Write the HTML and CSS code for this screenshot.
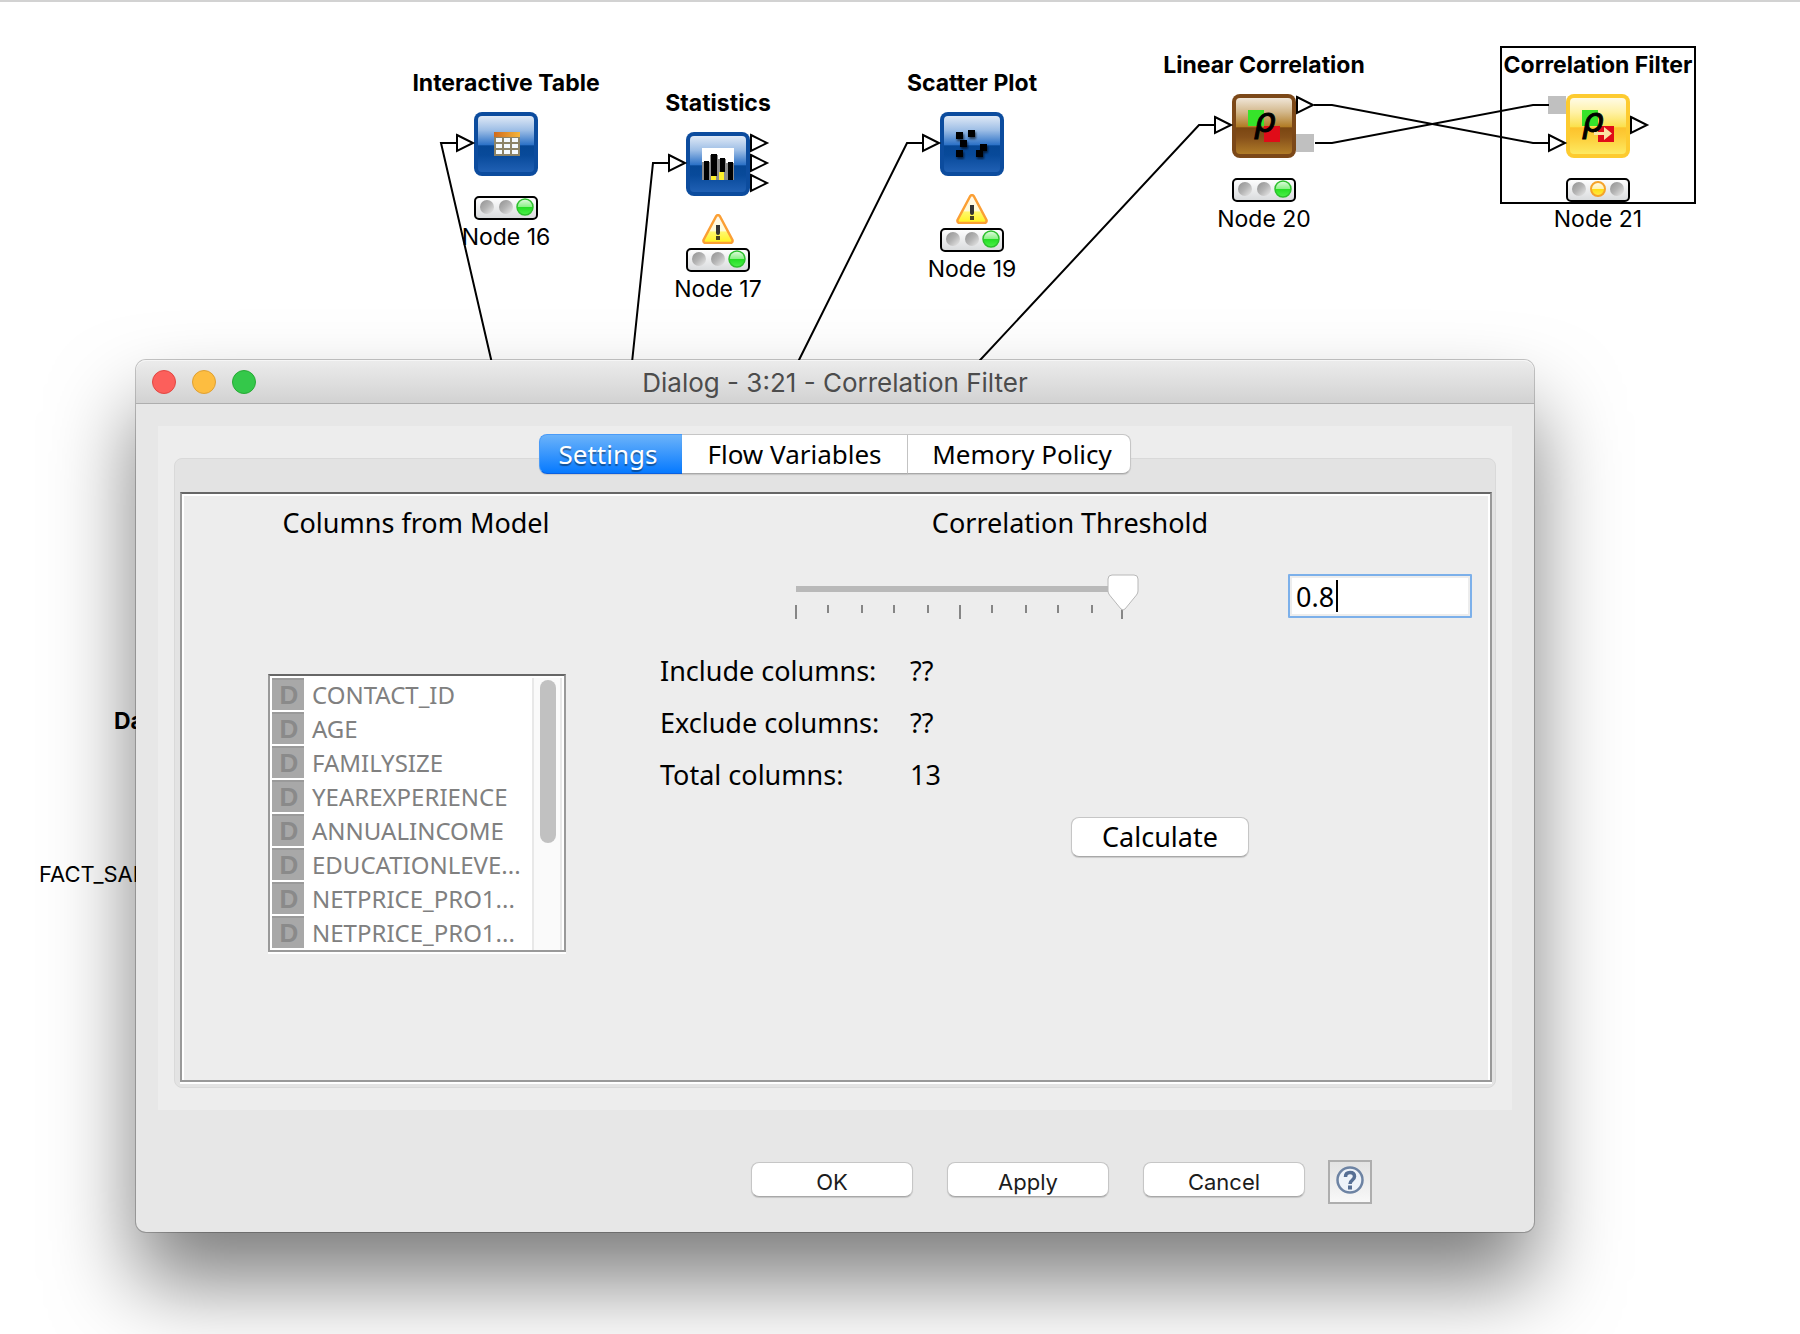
FILE: index.html
```html
<!DOCTYPE html>
<html lang="en">
<head>
<meta charset="utf-8">
<title>Dialog - 3:21 - Correlation Filter</title>
<link rel="stylesheet" href="styles.css">
</head>
<body>
<main class="workspace">

  <svg width="0" height="0" class="defs" aria-hidden="true">
    <defs>
      <linearGradient id="blue" x1="0" y1="0" x2="0" y2="1">
        <stop offset="0" stop-color="#dfe9f6"/><stop offset=".25" stop-color="#9fbfe6"/><stop offset=".52" stop-color="#2a70c6"/>
        <stop offset=".53" stop-color="#064795"/><stop offset=".7" stop-color="#084a9a"/><stop offset="1" stop-color="#2060b4"/>
      </linearGradient>
      <linearGradient id="brown" x1="0" y1="0" x2="0" y2="1">
        <stop offset="0" stop-color="#f0e6d8"/><stop offset=".25" stop-color="#d3b88c"/><stop offset=".52" stop-color="#b07a22"/>
        <stop offset=".53" stop-color="#7a4612"/><stop offset=".7" stop-color="#86501a"/><stop offset="1" stop-color="#b07c28"/>
      </linearGradient>
      <linearGradient id="yellow" x1="0" y1="0" x2="0" y2="1">
        <stop offset="0" stop-color="#fffbe6"/><stop offset=".25" stop-color="#fff2a8"/><stop offset=".52" stop-color="#fbe04a"/>
        <stop offset=".53" stop-color="#fcc22c"/><stop offset=".7" stop-color="#fdce3a"/><stop offset="1" stop-color="#fdea62"/>
      </linearGradient>
      <linearGradient id="lamp-off" x1="0" y1="0" x2="1" y2="1">
        <stop offset="0" stop-color="#909090"/><stop offset=".5" stop-color="#b4b4b4"/><stop offset="1" stop-color="#ececec"/>
      </linearGradient>
      <linearGradient id="lamp-green" x1="0" y1="0" x2="0" y2="1">
        <stop offset="0" stop-color="#e4fbe2"/><stop offset=".48" stop-color="#8cf088"/><stop offset=".5" stop-color="#22dd22"/><stop offset="1" stop-color="#4cf04a"/>
      </linearGradient>
      <linearGradient id="lamp-amber" x1="0" y1="0" x2="0" y2="1">
        <stop offset="0" stop-color="#fffbe8"/><stop offset=".5" stop-color="#fff2b0"/><stop offset=".52" stop-color="#ffdc14"/><stop offset="1" stop-color="#ffee4a"/>
      </linearGradient>
      <linearGradient id="case" x1="0" y1="0" x2="0" y2="1">
        <stop offset="0" stop-color="#fff"/><stop offset="1" stop-color="#d8dadc"/>
      </linearGradient>
      <linearGradient id="warn" x1="0" y1="0" x2="0" y2="1">
        <stop offset="0" stop-color="#fff8ec"/><stop offset=".55" stop-color="#fffbd8"/><stop offset=".62" stop-color="#fff86a"/><stop offset="1" stop-color="#fff21c"/>
      </linearGradient>
      <linearGradient id="table-head" x1="0" y1="0" x2="1" y2="0">
        <stop offset="0" stop-color="#d06a1c"/><stop offset="1" stop-color="#f4b63c"/>
      </linearGradient>
      <filter id="soft"><feDropShadow dx="1" dy="2" stdDeviation="1" flood-opacity=".6"/></filter>
      <symbol id="lights" viewBox="0 0 64 24">
        <rect x="1" y="1" width="62" height="22" rx="4" fill="url(#case)" stroke="#000" stroke-width="2"/>
        <circle cx="13" cy="11" r="7" fill="url(#lamp-off)"/>
        <circle cx="32" cy="11" r="7" fill="url(#lamp-off)"/>
        <circle cx="51" cy="11" r="8" fill="url(#lamp-green)" stroke="#2cc02c" stroke-width="1.500"/>
      </symbol>
      <symbol id="lights-amber" viewBox="0 0 64 24">
        <rect x="1" y="1" width="62" height="22" rx="4" fill="url(#case)" stroke="#000" stroke-width="2"/>
        <circle cx="13" cy="11" r="7" fill="url(#lamp-off)"/>
        <circle cx="51" cy="11" r="7" fill="url(#lamp-off)"/>
        <circle cx="32" cy="11" r="7" fill="url(#lamp-amber)" stroke="#f5a32a" stroke-width="2"/>
      </symbol>
      <symbol id="warning" viewBox="0 0 32 30">
        <path d="M14 2.500Q16 -.5 18 2.500L30.500 26Q31 29 28 29H4Q1 29 1.500 26Z" fill="url(#warn)" stroke="#fb9f34" stroke-width="2.500" stroke-linejoin="round"/>
        <path d="M14 11h4v8q0 2-2 2t-2-2Z" fill="#333"/><rect x="14" y="22" width="4" height="4" fill="#4a4420"/>
      </symbol>
    </defs>
  </svg>

  <section class="node node-table">
    <h2 class="node-title">Interactive Table</h2>
    <svg class="node-icon" viewBox="0 0 64 64">
      <rect width="64" height="64" rx="8" fill="#0c4c9e"/><rect x="4" y="4" width="56" height="56" rx="4" fill="url(#blue)"/>
      <rect x="20" y="20" width="26" height="24" fill="#8c8468"/><rect x="20" y="20" width="26" height="5" fill="url(#table-head)"/>
      <path d="M22 26h6v4h-6zM30 26h6v4h-6zM38 26h6v4h-6zM22 32h6v4h-6zM30 32h6v4h-6zM38 32h6v4h-6zM22 38h6v4h-6zM30 38h6v4h-6zM38 38h6v4h-6z" fill="#f4faff"/>
    </svg>
    <svg class="node-lights"><use href="#lights"/></svg>
    <p class="node-label">Node 16</p>
  </section>

  <section class="node node-statistics">
    <h2 class="node-title">Statistics</h2>
    <svg class="node-icon" viewBox="0 0 64 64">
      <rect width="64" height="64" rx="8" fill="#0c4c9e"/><rect x="4" y="4" width="56" height="56" rx="4" fill="url(#blue)"/>
      <rect x="16" y="16" width="32" height="32" fill="#fff"/>
      <path d="M16 30h8v18h-8zM24 23h8v25h-8zM32 27h8v21h-8zM40 31h8v17h-8z" fill="#8c8c8c"/>
      <path d="M18 29h5v19h-5zM25 22h6v22h-6zM34 26h5v14h-5zM42 30h5v18h-5z" fill="#000"/>
      <path d="M25 44h5v4h-5zM33 40h5v8h-5z" fill="#fff02a"/>
    </svg>
    <svg class="node-warning" role="img" aria-label="Warning"><use href="#warning"/></svg>
    <svg class="node-lights"><use href="#lights"/></svg>
    <p class="node-label">Node 17</p>
  </section>

  <section class="node node-scatter">
    <h2 class="node-title">Scatter Plot</h2>
    <svg class="node-icon" viewBox="0 0 64 64">
      <rect width="64" height="64" rx="8" fill="#0c4c9e"/><rect x="4" y="4" width="56" height="56" rx="4" fill="url(#blue)"/>
      <path filter="url(#soft)" d="M16 20h7v7h-7zM28 18h7v7h-7zM20 28h7v7h-7zM16 38h7v7h-7zM40 32h7v7h-7zM36 38h7v7h-7z" fill="#000"/>
    </svg>
    <svg class="node-warning" role="img" aria-label="Warning"><use href="#warning"/></svg>
    <svg class="node-lights"><use href="#lights"/></svg>
    <p class="node-label">Node 19</p>
  </section>

  <section class="node node-correlation">
    <h2 class="node-title">Linear Correlation</h2>
    <svg class="node-icon" viewBox="0 0 64 64">
      <rect width="64" height="64" rx="8" fill="#7c4818"/><rect x="4" y="4" width="56" height="56" rx="4" fill="url(#brown)"/>
      <rect x="16" y="16" width="16" height="16" fill="#36e42a"/><rect x="32" y="32" width="16" height="16" fill="#e00c18"/>
      <text class="rho" x="22" y="38">ρ</text>
    </svg>
    <svg class="node-lights"><use href="#lights"/></svg>
    <p class="node-label">Node 20</p>
  </section>

  <section class="node node-filter is-selected">
    <h2 class="node-title">Correlation Filter</h2>
    <svg class="node-icon" viewBox="0 0 64 64">
      <rect width="64" height="64" rx="8" fill="#fdcb30"/><rect x="4" y="4" width="56" height="56" rx="4" fill="url(#yellow)"/>
      <rect x="16" y="16" width="16" height="16" fill="#36e42a"/><rect x="32" y="32" width="16" height="16" fill="#e00c18"/>
      <text class="rho" x="16" y="38">ρ</text>
      <path d="M28 38h10v-5l8 6.500l-8 6.500v-5h-10z" fill="#fbe3a4"/>
    </svg>
    <svg class="node-lights"><use href="#lights-amber"/></svg>
    <p class="node-label">Node 21</p>
  </section>

  <h2 class="node-title behind-title">Da</h2>
  <p class="node-label behind-label">FACT_SAL</p>

  <svg class="connections" viewBox="0 0 1800 400" width="1800" height="400" aria-hidden="true">
    <g fill="#c0c0c0"><rect x="1296" y="134" width="18" height="18"/><rect x="1548" y="96" width="18" height="18"/></g>
    <g fill="none" stroke="#000" stroke-width="2">
      <path d="M457 143H441L494 372"/>
      <path d="M669 163H653L631 372"/>
      <path d="M923 143H907L793 372"/>
      <path d="M1215 125H1199L969 372"/>
      <path d="M1314 105H1332L1533 143H1549"/>
      <path d="M1315 143H1332L1533 105H1549"/>
    </g>
    <g fill="#fff" stroke="#000" stroke-width="2">
      <path d="M457 135l16 8l-16 8z"/><path d="M669 155l16 8l-16 8z"/><path d="M923 135l16 8l-16 8z"/>
      <path d="M1215 117l16 8l-16 8z"/><path d="M1549 135l16 8l-16 8z"/>
      <path d="M751 135l16 8l-16 8z"/><path d="M751 155l16 8l-16 8z"/><path d="M751 175l16 8l-16 8z"/>
      <path d="M1297 97l16 8l-16 8z"/><path d="M1631 117l16 8l-16 8z"/>
    </g>
  </svg>

  <form class="dialog" role="dialog" aria-labelledby="dialog-title">
    <header class="titlebar">
      <div class="window-buttons">
        <button type="button" class="window-button close" aria-label="Close"></button>
        <button type="button" class="window-button minimize" aria-label="Minimize"></button>
        <button type="button" class="window-button maximize" aria-label="Zoom"></button>
      </div>
      <h1 class="dialog-title" id="dialog-title">Dialog - 3:21 - Correlation Filter</h1>
    </header>

    <div class="dialog-body">
      <div class="panel">
        <div class="tabs" role="tablist">
          <button type="button" role="tab" aria-selected="true" class="tab is-active">Settings</button>
          <button type="button" role="tab" aria-selected="false" class="tab">Flow Variables</button>
          <button type="button" role="tab" aria-selected="false" class="tab">Memory Policy</button>
        </div>
        <div class="group">
          <div class="settings" role="tabpanel">
            <section class="model">
              <h2 class="heading">Columns from Model</h2>
              <div class="list-box">
                <ul class="list">
                  <li class="list-item"><span class="type-icon">D</span>CONTACT_ID</li>
                  <li class="list-item"><span class="type-icon">D</span>AGE</li>
                  <li class="list-item"><span class="type-icon">D</span>FAMILYSIZE</li>
                  <li class="list-item"><span class="type-icon">D</span>YEAREXPERIENCE</li>
                  <li class="list-item"><span class="type-icon">D</span>ANNUALINCOME</li>
                  <li class="list-item"><span class="type-icon">D</span>EDUCATIONLEVE...</li>
                  <li class="list-item"><span class="type-icon">D</span>NETPRICE_PRO1...</li>
                  <li class="list-item"><span class="type-icon">D</span>NETPRICE_PRO1...</li>
                </ul>
                <div class="scrollbar"><div class="scrollbar-thumb"></div></div>
              </div>
            </section>

            <section class="threshold">
              <h2 class="heading" id="threshold-heading">Correlation Threshold</h2>
              <div class="threshold-row">
                <div class="slider">
                  <input class="slider-input" type="range" min="0" max="1" step="0.1" value="1" aria-labelledby="threshold-heading">
                  <svg class="slider-ticks" viewBox="0 0 360 14" aria-hidden="true">
                    <path d="M16 0v14M48 0v8M82 0v8M114 0v8M148 0v8M180 0v14M212 0v8M246 0v8M278 0v8M312 0v8M342 0v14" stroke="#868686" stroke-width="2"/>
                  </svg>
                </div>
                <div class="field">
                  <input class="field-input" type="text" value="0.8" aria-labelledby="threshold-heading">
                  <span class="field-caret"></span>
                </div>
              </div>
              <dl class="summary">
                <dt>Include columns:</dt><dd>??</dd>
                <dt>Exclude columns:</dt><dd>??</dd>
                <dt>Total columns:</dt><dd>13</dd>
              </dl>
              <button type="button" class="button calculate">Calculate</button>
            </section>
          </div>
        </div>
      </div>
    </div>

    <footer class="dialog-footer">
      <div class="actions">
        <button type="submit" class="button action">OK</button>
        <button type="button" class="button action">Apply</button>
        <button type="button" class="button action">Cancel</button>
      </div>
      <button type="button" class="help" aria-label="Help">
        <svg width="28" height="28" viewBox="0 0 28 28">
          <circle cx="14" cy="14" r="12.500" fill="#eef3f9" stroke="#6d83a3" stroke-width="2.500"/>
          <path d="M9.500 11q0-4.500 4.500-4.500t4.500 4q0 2-2.200 3.600t-2.300 3.900" fill="none" stroke="#566f94" stroke-width="3.500"/>
          <rect x="12" y="19.500" width="4" height="4" fill="#566f94"/>
        </svg>
      </button>
    </footer>
  </form>
</main>
</body>
</html>
```
FILE: styles.css
```css
*,
*::before { box-sizing: border-box; }

body,
h1, h2, p, ul, dl, dd {
  margin: 0;
  padding: 0;
}

body {
  background: #fff;
  color: #000;
  font-family: Inter, "Liberation Sans", sans-serif;
  font-size: 23px;
  line-height: 28px;
}

button,
input {
  margin: 0;
  font: inherit;
  color: inherit;
}

.workspace {
  position: relative;
  min-height: 100vh;
  overflow: hidden;
  border-top: 2px solid #d2d2d2;
}

.defs { position: absolute; }

/* Workflow canvas */

.node {
  position: absolute;
  display: flex;
  flex-direction: column;
  align-items: center;
  width: 196px;
}

.node-table { left: 408px; top: 66px; }
.node-statistics { left: 620px; top: 86px; }
.node-scatter { left: 874px; top: 66px; }
.node-correlation { left: 1166px; top: 48px; }
.node-filter { left: 1500px; top: 48px; }

.node-title {
  font-size: 23px;
  font-weight: 700;
  line-height: 30px;
  white-space: nowrap;
}

.node-icon {
  width: 64px;
  height: 64px;
  margin: 14px 0 20px;
}

.node-warning {
  width: 32px;
  height: 30px;
  margin: -2px 0 4px;
}

.node-lights {
  width: 64px;
  height: 24px;
}

.node-label {
  margin-top: 2px;
  line-height: 30px;
  white-space: nowrap;
}

.rho {
  font: italic 34px "DejaVu Sans", sans-serif;
  stroke: #000;
  stroke-width: 1px;
}

.is-selected::before {
  content: "";
  position: absolute;
  top: -4px;
  left: 0;
  width: 100%;
  height: 158px;
  border: 2px solid #000;
}

.behind-title {
  position: absolute;
  left: 114px;
  top: 704px;
}

.behind-label {
  position: absolute;
  left: 39px;
  top: 855px;
  font-size: 22px;
}

.connections {
  position: absolute;
  left: 0;
  top: -2px;
}

/* Dialog window */

.dialog {
  position: absolute;
  left: 136px;
  right: 266px;
  top: 358px;
  border-radius: 10px;
  background: #e7e7e7;
  box-shadow: 0 0 0 1px rgba(0, 0, 0, .22), 0 50px 84px rgba(0, 0, 0, .51);
  font-family: "Noto Sans", "Open Sans", sans-serif;
}

.titlebar {
  display: grid;
  grid-template-columns: 1fr auto 1fr;
  align-items: center;
  height: 44px;
  padding: 0 16px;
  border-bottom: 1px solid #aeaeae;
  border-radius: 10px 10px 0 0;
  background: linear-gradient(#ececec, #d2d2d2);
  box-shadow: inset 0 1px #f6f6f6;
}

.window-buttons {
  display: flex;
  gap: 16px;
}

.window-button {
  width: 24px;
  height: 24px;
  padding: 0;
  border: 1px solid;
  border-radius: 50%;
}

.close { background: #fc5f5b; border-color: #e24742; }
.minimize { background: #fdbd40; border-color: #dfa033; }
.maximize { background: #34c84a; border-color: #27aa35; }

.dialog-title {
  padding-top: 2px;
  color: #4c4c4c;
  font-family: Inter, "Liberation Sans", sans-serif;
  font-size: 26px;
  font-weight: 400;
  line-height: 32px;
  white-space: nowrap;
}

.dialog-body { padding: 22px 22px 0; }

.panel {
  padding: 8px 16px 22px;
  background: #ededed;
}

.tabs {
  position: relative;
  display: flex;
  justify-content: center;
}

.tab {
  width: 226px;
  height: 40px;
  padding: 0;
  border: 1px solid #c6c6c6;
  border-bottom-color: #a8a8a8;
  border-left-width: 0;
  background: #fff;
  box-shadow: 0 1px 1px rgba(0, 0, 0, .12);
  font-size: 26px;
  line-height: 38px;
  white-space: nowrap;
}

.tab:last-child {
  width: 223px;
  padding-left: 6px;
  border-radius: 0 8px 8px 0;
}

.tab.is-active {
  width: 143px;
  padding-right: 6px;
  border: 1px solid #4a9bf7;
  border-right: 0;
  border-bottom-color: #0a60e0;
  border-radius: 8px 0 0 8px;
  background: linear-gradient(#6bb3fa, #067aff);
  color: #fff;
  text-shadow: 0 2px 1px rgba(0, 0, 0, .4);
}

.group {
  margin-top: -16px;
  padding: 33px 3px 5px 5px;
  border: 1px solid #d9d9d9;
  border-radius: 8px;
  background: #e3e3e3;
}

.settings {
  display: grid;
  grid-template-columns: 468px 1fr;
  min-height: 590px;
  border: 2px solid #999;
  border-top-color: #666;
  background: #ededed;
  box-shadow: 0 2px #fff, inset 2px 2px #fff, inset -2px 0 #fff;
}

.heading {
  font-size: 27px;
  font-weight: 400;
  line-height: 38px;
  text-align: center;
}

.model,
.threshold {
  display: flex;
  flex-direction: column;
  padding-top: 10px;
}

/* Column list */

.list-box {
  display: flex;
  align-self: center;
  width: 298px;
  margin: 132px 0 0 2px;
  padding: 2px 2px 0;
  border: 2px solid #999;
  border-top-color: #666;
  background: #fff;
  box-shadow: 0 2px #fff;
}

.list {
  flex: 1;
  min-width: 0;
  list-style: none;
}

.list-item {
  display: flex;
  gap: 8px;
  height: 34px;
  color: #808080;
  font-size: 24px;
  line-height: 34px;
  white-space: nowrap;
}

.type-icon {
  flex: none;
  width: 32px;
  height: 32px;
  padding-left: 2px;
  border-top: 2px solid #9a9a9a;
  background: #a8a8a8;
  color: #8a8a8a;
  font-family: "Liberation Sans", sans-serif;
  font-size: 26px;
  font-weight: 700;
  line-height: 30px;
  text-align: center;
}

.scrollbar {
  width: 30px;
  padding: 2px 6px;
  border: 2px solid #e8e8e8;
  border-width: 0 2px;
  background: #fafafa;
}

.scrollbar-thumb {
  width: 16px;
  height: 163px;
  border-radius: 8px;
  background: #c1c1c1;
}

/* Threshold controls */

.threshold-row {
  display: flex;
  justify-content: space-between;
  margin-top: 32px;
  padding: 0 18px 0 130px;
}

.slider {
  display: grid;
  width: 360px;
}

.slider-input {
  grid-area: 1 / 1;
  z-index: 1;
  -webkit-appearance: none;
  appearance: none;
  width: 359px;
  height: 36px;
  background: transparent;
}

.slider-input::-webkit-slider-runnable-track {
  height: 36px;
  background: linear-gradient(#b9b9b9, #b9b9b9) 16px 12px / 312px 6px no-repeat;
}

.slider-input::-webkit-slider-thumb {
  -webkit-appearance: none;
  width: 32px;
  height: 38px;
  background: url("data:image/svg+xml,%3Csvg xmlns='http://www.w3.org/2000/svg' viewBox='0 0 32 38'%3E%3Cpath d='M5 1h22q4 0 4 4v12q0 2-1.500 4L18 35q-2 2-4 0L2.500 21Q1 19 1 17V5q0-4 4-4z' fill='%23fff' stroke='%23b8b8b8'/%3E%3C/svg%3E");
}

.slider-ticks {
  grid-area: 1 / 1;
  width: 360px;
  height: 14px;
  margin-top: 31px;
}

.field {
  position: relative;
  width: 184px;
}

.field-input {
  width: 100%;
  height: 44px;
  padding: 0 6px;
  border: 2px solid #7cb0ea;
  border-radius: 1px;
  outline: 0;
  background: #fff;
  box-shadow: inset 0 0 0 2px #ededed;
  font-size: 27px;
}

.field-caret {
  position: absolute;
  left: 48px;
  top: 6px;
  width: 2px;
  height: 32px;
  background: #000;
}

.summary {
  display: grid;
  grid-template-columns: 250px 1fr;
  margin-top: 26px;
  padding-left: 10px;
  font-size: 27px;
  line-height: 52px;
}

.button {
  padding: 0;
  border: 1px solid #c6c6c6;
  border-bottom-color: #a8a8a8;
  border-radius: 8px;
  background: #fff;
  box-shadow: 0 1px 1px rgba(0, 0, 0, .15);
}

.calculate {
  width: 178px;
  height: 40px;
  margin: 16px 0 0 421px;
  font-size: 27px;
  line-height: 36px;
}

/* Footer */

.dialog-footer {
  display: flex;
  justify-content: flex-end;
  gap: 23px;
  padding: 50px 162px 28px 0;
}

.actions {
  display: flex;
  gap: 34px;
  padding-top: 2px;
}

.action {
  width: 162px;
  height: 35px;
  padding-top: 4px;
  color: #1c1c1c;
  font-family: Inter, "Liberation Sans", sans-serif;
  font-size: 22px;
  line-height: 28px;
}

.help {
  width: 44px;
  height: 44px;
  padding: 0;
  border: 2px solid #aeaeae;
  background: linear-gradient(#e2e2e2, #f8f8f8);
  line-height: 0;
}

.help svg { margin-bottom: 4px; }
```
